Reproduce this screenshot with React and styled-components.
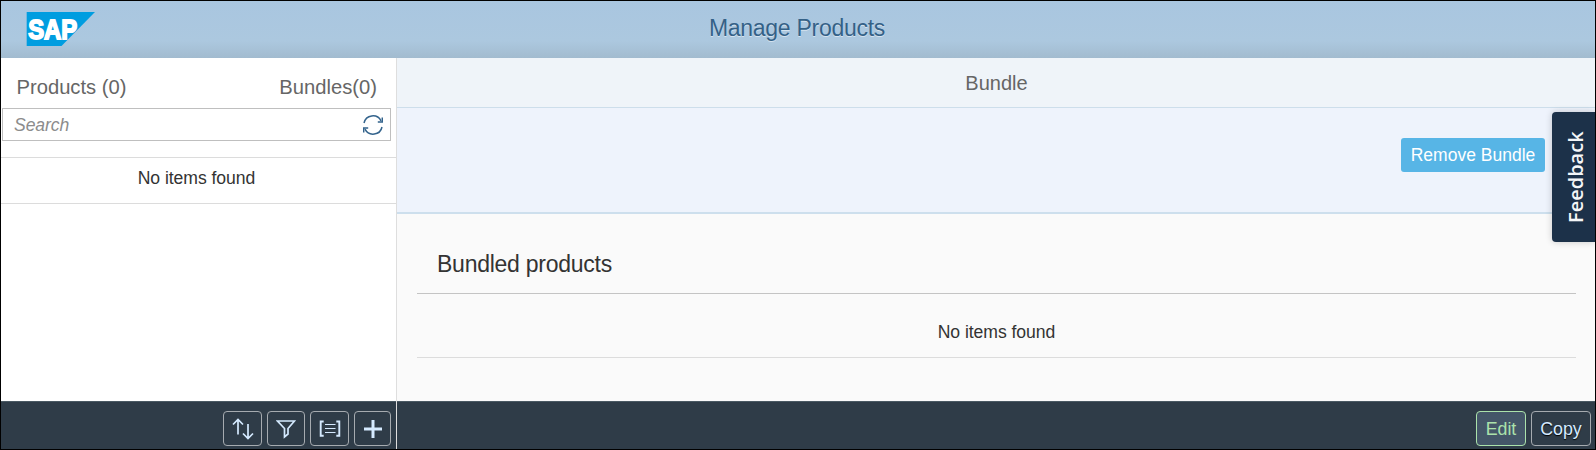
import React from "react";
import styled, { createGlobalStyle } from "styled-components";

const Global = createGlobalStyle`
  * { box-sizing: border-box; }
  body { margin: 0; font-family: "Liberation Sans", Arial, sans-serif; }
`;

const Frame = styled.div`
  position: relative;
  width: 1596px;
  height: 450px;
  border: 1px solid #000;
  display: flex;
  flex-direction: column;
  overflow: hidden;
  background: #fff;
`;

const Shell = styled.header`
  flex: none;
  height: 57px;
  display: grid;
  grid-template-columns: 200px 1fr 200px;
  align-items: center;
  padding: 0 26px 0 25px;
  background: linear-gradient(#a9c6e0 0, #acc8df 70%, #a2bbcf 100%);
`;

const ShellTitle = styled.h1`
  margin: 0;
  padding: 0 1px 3px 0;
  text-align: center;
  font-size: 23px;
  letter-spacing: -0.27px;
  line-height: 28px;
  font-weight: 400;
  color: #346187;
  text-shadow: 0 1px 0 rgba(255, 255, 255, 0.5);
`;

const Logo = styled.svg`
  display: block;
  width: 70px;
  height: 34px;
  margin-bottom: 1px;
`;

const Body = styled.div`
  flex: 1;
  min-height: 0;
  display: grid;
  grid-template-columns: 396px 1fr;
`;

const Column = styled.section`
  display: flex;
  flex-direction: column;
  min-width: 0;
  background: ${(p) => p.$bg};
`;

const Master = styled(Column)`
  border-right: 1px solid #dedede;
`;

const Tabs = styled.div`
  height: 50px;
  padding: 17px 19px 0 15.5px;
  display: flex;
  justify-content: space-between;
  font-size: 20.2px;
  line-height: 24px;
  color: #666;
`;

const SearchBox = styled.div`
  height: 33px;
  margin: 0 5px 0 1px;
  padding: 0 7px 0 11px;
  border: 1px solid #bfbfbf;
  display: flex;
  align-items: center;
  justify-content: space-between;
  font-size: 17.6px;
  font-style: italic;
  color: #8c8c8c;
`;

const Placeholder = styled.span`
  padding-top: 2px;
  letter-spacing: -0.1px;
`;

const EmptyRow = styled.div`
  height: ${(p) => p.$height}px;
  margin-top: ${(p) => p.$top}px;
  padding-top: ${(p) => p.$pad}px;
  padding-right: ${(p) => p.$right}px;
  border-top: 1px solid ${(p) => p.$line};
  border-bottom: 1px solid #dcdcdc;
  text-align: center;
  font-size: 17.6px;
  letter-spacing: -0.05px;
  line-height: 20px;
  color: #333;
`;

const DetailHead = styled.div`
  height: 50px;
  padding: 13px 0 0 1px;
  border-bottom: 1px solid #cddeeb;
  background: #eff4f9;
  text-align: center;
  font-size: 20px;
  line-height: 24px;
  color: #666;
`;

const ObjectHead = styled.div`
  height: 106px;
  padding: 30px 50px 0 0;
  border-bottom: 2px solid #cddfed;
  background: #eef3fc;
  display: flex;
  justify-content: flex-end;
  align-items: flex-start;
`;

const RemoveButton = styled.button`
  width: 144px;
  height: 34px;
  padding: 0;
  border: 0;
  border-radius: 3px;
  background: #57b5e6;
  color: #fff;
  font: 17.5px "Liberation Sans", Arial, sans-serif;
`;

const Content = styled.div`
  flex: 1;
  padding: 0 19px 0 20px;
`;

const TableTitle = styled.h2`
  margin: 0;
  height: 79px;
  padding: 36px 0 0 20px;
  font-size: 23px;
  letter-spacing: -0.25px;
  line-height: 28px;
  font-weight: 400;
  color: #333;
`;

const Footer = styled.footer`
  flex: none;
  height: 48px;
  margin-top: auto;
  padding: 9px ${(p) => p.$right}px 0 0;
  display: flex;
  justify-content: flex-end;
  gap: 5px;
  border-top: 1px solid #4a5963;
  background: #2f3c48;
`;

const FooterButton = styled.button`
  width: ${(p) => p.$w}px;
  height: 35px;
  padding: ${(p) => (p.$text ? 2 : 0)}px 0 0;
  border: 1px solid ${(p) => (p.$accept ? "#abe2ab" : "#a6abb0")};
  border-radius: 4px;
  background: ${(p) => (p.$accept ? "#445668" : "transparent")};
  color: ${(p) => (p.$accept ? "#abe2ab" : "#d5eaff")};
  font: 17.8px "Liberation Sans", Arial, sans-serif;
  text-shadow: ${(p) => (p.$accept ? "none" : "0 1px 1px #000")};
  display: flex;
  align-items: center;
  justify-content: center;
`;

const Icon = styled.svg`
  display: block;
  fill: none;
  stroke: ${(p) => p.$color || "#d5eaff"};
  stroke-width: ${(p) => p.$weight || 1.5};
`;

const FeedbackTab = styled.div`
  position: absolute;
  right: 0;
  top: 111px;
  width: 43px;
  height: 130px;
  padding-right: 4px;
  border-radius: 0 4px 4px 0;
  background: #1c3149;
  box-shadow: 0 0 7px rgba(0, 0, 0, 0.2);
  display: flex;
  align-items: center;
  justify-content: center;
  color: #f4f6f8;
  font: 600 20px "Open Sans", "Noto Sans", sans-serif;
  writing-mode: vertical-rl;
  transform: rotate(180deg);
`;

function SapLogo() {
  return (
    <Logo viewBox="0 0 70 34" role="img" aria-label="SAP">
      <path d="M0.7 0H69L35.5 34H0.7Z" fill="#009de0" />
      <text
        x="2.2"
        y="27"
        fontFamily="Liberation Sans, Arial, sans-serif"
        fontWeight="700"
        fontSize="27.5"
        textLength="49"
        lengthAdjust="spacingAndGlyphs"
        fill="#fff"
        stroke="#fff"
        strokeWidth="1.8"
      >
        SAP
      </text>
    </Logo>
  );
}

function RefreshIcon() {
  return (
    <Icon width="20" height="20" viewBox="0 0 20 20" $color="#33638c">
      <path d="M1 8A9.1 9.1 0 0 1 18 5.8M19 12A9.1 9.1 0 0 1 2 14.2" />
      <path d="M19.3 2.5V7H14.8M0.7 17.5V13H5.2" />
    </Icon>
  );
}

function SortIcon() {
  return (
    <Icon width="22" height="22" viewBox="0 0 22 22" $weight={1.7}>
      <path d="M6 16.5V1.5M1 6.5L6 1.5L11 6.5M16 6V20.5M11 15.5L16 20.5L21 15.5" />
    </Icon>
  );
}

function FilterIcon() {
  return (
    <Icon width="20" height="20" viewBox="0 0 20 20" $weight={1.7}>
      <path d="M1.5 2H18.5L12 9.5V15L8.5 18V9.5Z" />
    </Icon>
  );
}

function GroupIcon() {
  return (
    <Icon width="22" height="18" viewBox="0 0 22 18">
      <path d="M4.7 1.5H1.7V15.8H4.7M17.3 1.5H20.3V15.8H17.3" strokeWidth="1.9" />
      <path d="M6 4.5H16.5M6 8.5H16.5M6 12.5H16.5" strokeWidth="1.2" />
    </Icon>
  );
}

function AddIcon() {
  return (
    <Icon width="20" height="20" viewBox="0 0 20 20" $weight={3}>
      <path d="M10 1V19M1 10H19" />
    </Icon>
  );
}

export default function App() {
  return (
    <>
      <Global />
      <Frame>
        <Shell>
          <SapLogo />
          <ShellTitle>Manage Products</ShellTitle>
        </Shell>
        <Body>
          <Master $bg="#fff">
            <Tabs>
              <span>Products (0)</span>
              <span>Bundles(0)</span>
            </Tabs>
            <SearchBox>
              <Placeholder>Search</Placeholder>
              <RefreshIcon />
            </SearchBox>
            <EmptyRow $height={47} $top={16} $pad={10} $right={4} $line="#dcdcdc">
              No items found
            </EmptyRow>
            <Footer $right={5}>
              <FooterButton $w={39} aria-label="Sort"><SortIcon /></FooterButton>
              <FooterButton $w={38} aria-label="Filter"><FilterIcon /></FooterButton>
              <FooterButton $w={39} aria-label="Group"><GroupIcon /></FooterButton>
              <FooterButton $w={37} aria-label="Add"><AddIcon /></FooterButton>
            </Footer>
          </Master>
          <Column $bg="#fafafa">
            <DetailHead>Bundle</DetailHead>
            <ObjectHead>
              <RemoveButton>Remove Bundle</RemoveButton>
            </ObjectHead>
            <Content>
              <TableTitle>Bundled products</TableTitle>
              <EmptyRow $height={65} $top={0} $pad={28} $right={0} $line="#c4c4c4">
                No items found
              </EmptyRow>
            </Content>
            <Footer $right={4}>
              <FooterButton $w={50} $text $accept>Edit</FooterButton>
              <FooterButton $w={60} $text>Copy</FooterButton>
            </Footer>
          </Column>
        </Body>
        <FeedbackTab>Feedback</FeedbackTab>
      </Frame>
    </>
  );
}
